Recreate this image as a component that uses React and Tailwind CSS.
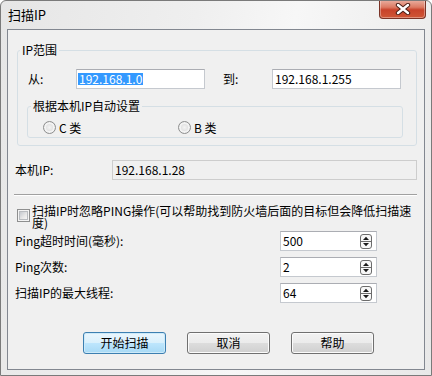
import React from "react";

function CloseButton() {
  return (
    <div className="w-[47px] h-[19px] mr-[5px] -mt-[1px] flex items-center justify-center rounded-b-[4px] border border-t-0 border-[#7a3326] bg-[linear-gradient(to_bottom,#eab0a2_0%,#dc7a63_40%,#c8422a_55%,#cf5636_100%)] shadow-[inset_0_0_0_1px_rgba(255,255,255,0.35)]">
      <svg width="16" height="12" viewBox="0 0 16 12">
        <path d="M3 2 L13 10 M13 2 L3 10" stroke="#4a1f17" strokeWidth="4.4" strokeLinecap="round" />
        <path d="M3 2 L13 10 M13 2 L3 10" stroke="#ffffff" strokeWidth="2.4" strokeLinecap="round" />
      </svg>
    </div>
  );
}

function Radio({ label, className }) {
  return (
    <div className={"flex items-center gap-[3px] " + (className || "")}>
      <span className="w-[13px] h-[13px] rounded-full border border-[#8e8f8f] bg-[radial-gradient(circle,#f4f4f4_0%,#dcdcdc_60%,#c8c8c8_100%)] shadow-[inset_0_0_0_2px_#f3f3f3]" />
      <span className="leading-[14px]">{label}</span>
    </div>
  );
}

function Spin() {
  return (
    <svg width="12" height="15" viewBox="0 0 12 15">
      <rect x="0.5" y="0.5" width="11" height="14" rx="2.5" fill="#f7f7f7" stroke="#6c6c6c" />
      <line x1="1" y1="7.5" x2="11" y2="7.5" stroke="#6c6c6c" />
      <path d="M3 6 L6 2.8 L9 6 Z" fill="#1a1a1a" />
      <path d="M3 9 L6 12.2 L9 9 Z" fill="#1a1a1a" />
    </svg>
  );
}

function SpinRow({ label, value, className }) {
  return (
    <div className={"flex items-center h-[20px] pl-[7px] " + (className || "")}>
      <span className="w-[265px] leading-[14px]">{label}</span>
      <div className="w-[97px] h-[20px] flex items-center justify-between bg-white border border-[#c5c9cf] border-t-[#abadb3] pl-[2px] pr-[4px]">
        <span className="leading-[14px]">{value}</span>
        <Spin />
      </div>
    </div>
  );
}

function Button({ children, primary }) {
  return (
    <button
      className={
        "w-[83px] h-[22px] rounded-[3px] border text-[12px] leading-[14px] flex items-center justify-center " +
        (primary
          ? "border-[#3c7fb1] bg-[linear-gradient(to_bottom,#eaf6fd_0%,#d9f0fc_50%,#bee6fd_50%,#a7d9f5_100%)] shadow-[inset_0_0_0_1px_#cdeaf9]"
          : "border-[#707070] bg-[linear-gradient(to_bottom,#f2f2f2_0%,#ebebeb_50%,#dddddd_50%,#cfcfcf_100%)] shadow-[inset_0_0_0_1px_#fbfbfb]")
      }
    >
      {children}
    </button>
  );
}

export default function App() {
  return (
    <div className="w-[432px] h-[376px] flex flex-col overflow-hidden rounded-t-[6px] border border-[#7a7a7a] bg-[linear-gradient(100deg,#e6e6e6_0%,#efefef_40%,#f7f7f7_60%,#e8e8e8_100%)] font-['Noto_Sans_CJK_SC',sans-serif] text-[12px] text-black">
      {/* Title bar */}
      <div className="h-[28px] flex items-start justify-between">
        <span className="ml-[7px] mt-[5px] text-[13px] leading-[17px]">扫描IP</span>
        <CloseButton />
      </div>

      {/* Client area */}
      <div className="flex-1 mx-[6px] mb-[5px] border border-[#828790] bg-[#f0f0f0] flex flex-col">
        {/* IP range */}
        <fieldset className="mt-[13px] ml-[9px] w-[400px] border border-[#d5dfe5] rounded-[3px]">
          <legend className="ml-[2px] px-[2px] leading-[14px]">IP范围</legend>
          <div className="flex items-center h-[20px] mt-[12px] pl-[10px]">
            <span className="w-[48px] leading-[14px]">从:</span>
            <div className="w-[129px] h-[20px] flex items-center bg-white border border-[#c5c9cf] border-t-[#abadb3] pl-[1px]">
              <span className="bg-[#3399ff] text-white leading-[12px] px-[1px]">192.168.1.0</span>
            </div>
            <span className="ml-[18px] w-[49px] leading-[14px]">到:</span>
            <div className="w-[129px] h-[20px] flex items-center bg-white border border-[#c5c9cf] border-t-[#abadb3] pl-[2px]">
              <span className="leading-[14px]">192.168.1.255</span>
            </div>
          </div>

          <fieldset className="mt-[10px] ml-[9px] mb-[7px] w-[376px] border border-[#d5dfe5] rounded-[3px]">
            <legend className="ml-[3px] px-[2px] leading-[14px]">根据本机IP自动设置</legend>
            <div className="flex items-center h-[13px] mt-[8px] mb-[3px] pl-[15px]">
              <Radio label="C 类" className="w-[135px]" />
              <Radio label="B 类" />
            </div>
          </fieldset>
        </fieldset>

        {/* Local IP */}
        <div className="flex items-center h-[20px] mt-[14px] pl-[7px]">
          <span className="w-[97px] leading-[14px]">本机IP:</span>
          <div className="w-[305px] h-[20px] flex items-center border border-[#cdcdcd] bg-[#f0f0f0] pl-[2px]">
            <span className="leading-[14px]">192.168.1.28</span>
          </div>
        </div>

        {/* Separator */}
        <div className="mt-[14px] ml-[6px] w-[403px] border-t border-[#a0a0a0] border-b border-b-white" />

        {/* Ignore ping */}
        <div className="flex items-start mt-[9px] ml-[9px]">
          <span className="mt-[4px] w-[13px] h-[13px] border border-[#8e8f8f] bg-[#f4f4f4] flex items-center justify-center">
            <span className="w-[9px] h-[9px] bg-[linear-gradient(135deg,#c5c9cf_0%,#e8e8e8_60%,#f6f6f6_100%)] border border-[#b9bcc0]" />
          </span>
          <span className="ml-[2px] w-[384px] leading-[12px]">
            扫描IP时忽略PING操作(可以帮助找到防火墙后面的目标但会降低扫描速度)
          </span>
        </div>

        {/* Ping settings */}
        <SpinRow label="Ping超时时间(毫秒):" value="500" className="mt-[2px]" />
        <SpinRow label="Ping次数:" value="2" className="mt-[6px]" />
        <SpinRow label="扫描IP的最大线程:" value="64" className="mt-[6px]" />

        {/* Buttons */}
        <div className="flex gap-[21px] mt-[29px] ml-[75px]">
          <Button primary>开始扫描</Button>
          <Button>取消</Button>
          <Button>帮助</Button>
        </div>
      </div>
    </div>
  );
}
